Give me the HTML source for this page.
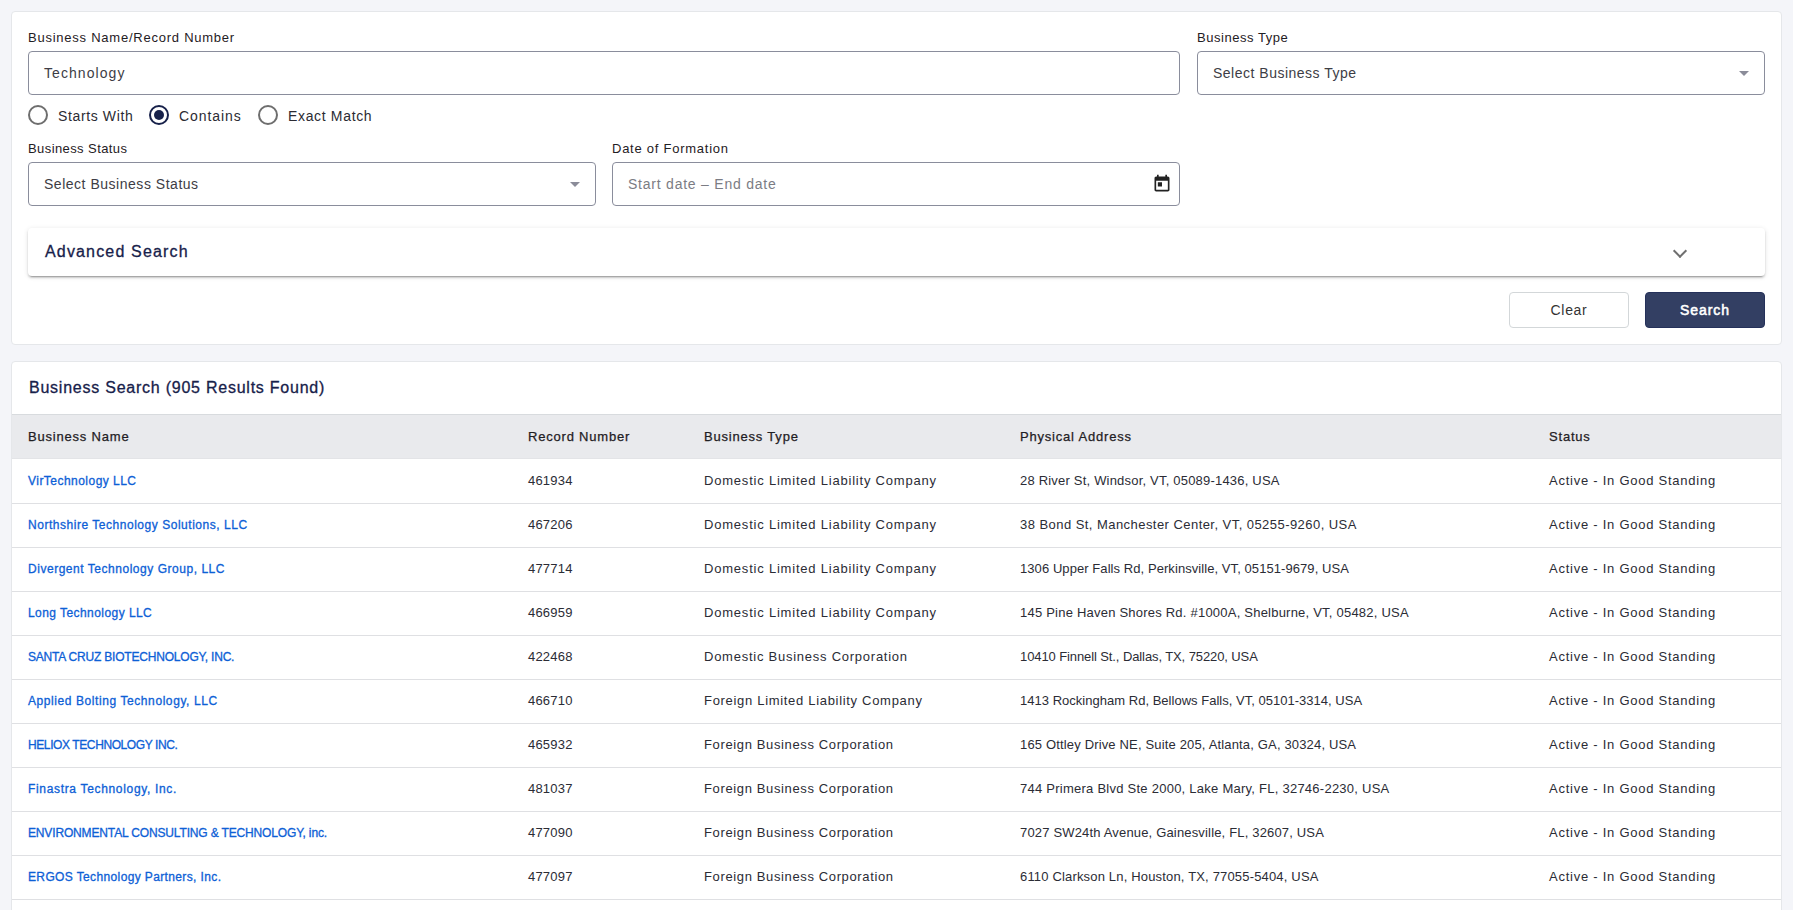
<!DOCTYPE html>
<html><head><meta charset="utf-8">
<style>
*{box-sizing:border-box;margin:0;padding:0}
html,body{width:1793px;height:910px;overflow:hidden}
body{background:#f4f5f9;font-family:"Liberation Sans",sans-serif;position:relative;color:#222}
.card{position:absolute;left:11px;width:1771px;background:#fff;border:1px solid #e5e7ea;border-radius:4px}
#c1{top:11px;height:334px}
#c2{top:361px;height:600px}
.abs{position:absolute;white-space:nowrap}
.lbl{font-size:13px;color:#1f2024;letter-spacing:0.75px}
.inp{position:absolute;border:1px solid #8a8d9c;border-radius:4px;background:#fff}
.itxt{position:absolute;font-size:14px;color:#3d3d45;letter-spacing:0.9px;white-space:nowrap}
.ph{color:#7b7c84}
.caret{position:absolute;width:0;height:0;border-left:5px solid transparent;border-right:5px solid transparent;border-top:5px solid #8b8c99}
.radio{position:absolute;width:20px;height:20px;border-radius:50%;border:2px solid #6e6e6e}
.radio.on{border-color:#17214a}
.radio.on::after{content:"";position:absolute;left:3px;top:3px;width:10px;height:10px;border-radius:50%;background:#17214a}
.ttl{font-size:16px;color:#17214a;-webkit-text-stroke:0.3px #17214a}
.rtxt{font-size:14px;color:#2b2b33;letter-spacing:0.6px}
.panel{position:absolute;left:16px;top:216px;width:1737px;height:48px;background:#fff;border-radius:4px;box-shadow:0 3px 1px -2px rgba(0,0,0,.2),0 2px 2px 0 rgba(0,0,0,.14),0 1px 5px 0 rgba(0,0,0,.12)}
.btn{position:absolute;top:280px;width:120px;height:36px;border-radius:4px;font-size:14px;text-align:center;line-height:34px;letter-spacing:0.5px}
table{position:absolute;left:0;top:52px;width:1769px;border-collapse:separate;border-spacing:0}
th{height:45px;background:#e9eaed;border-top:1px solid #d8dbde;border-bottom:1px solid #e3e4e7;text-align:left;font-weight:normal;font-size:13px;color:#1f2024;padding:0 0 1px 0;letter-spacing:0.8px;-webkit-text-stroke:0.25px #1f2024}
td{height:44px;border-bottom:1px solid #dfe0e3;font-size:13px;color:#2b2c35;padding:0 0 2px 0;letter-spacing:0.2px;white-space:nowrap}
td.c5{letter-spacing:0.75px}
tr.r1 td{height:45px}
td.c4{letter-spacing:0.25px}
.c1{width:516px;padding-left:16px!important}.c2{width:176px}.c3{width:316px}.c4{width:529px}
td a{color:#0d60d6;text-decoration:none;font-size:12px;-webkit-text-stroke:0.3px #0d60d6}
</style></head>
<body>
<div class="card" id="c1">
  <div class="abs lbl" style="left:16px;top:18px;letter-spacing:0.76px">Business Name/Record Number</div>
  <div class="inp" style="left:16px;top:39px;width:1152px;height:44px"></div>
  <div class="itxt" style="left:32px;top:53px;letter-spacing:1.07px">Technology</div>

  <div class="abs lbl" style="left:1185px;top:18px;letter-spacing:0.53px">Business Type</div>
  <div class="inp" style="left:1185px;top:39px;width:568px;height:44px"></div>
  <div class="itxt" style="left:1201px;top:53px;letter-spacing:0.5px">Select Business Type</div>
  <div class="caret" style="left:1727px;top:59px"></div>

  <div class="radio" style="left:16px;top:93px"></div>
  <div class="abs rtxt" style="left:46px;top:96px;letter-spacing:0.63px">Starts With</div>
  <div class="radio on" style="left:137px;top:93px"></div>
  <div class="abs rtxt" style="left:167px;top:96px;letter-spacing:0.93px">Contains</div>
  <div class="radio" style="left:246px;top:93px"></div>
  <div class="abs rtxt" style="left:276px;top:96px;letter-spacing:0.66px">Exact Match</div>

  <div class="abs lbl" style="left:16px;top:129px;letter-spacing:0.41px">Business Status</div>
  <div class="inp" style="left:16px;top:150px;width:568px;height:44px"></div>
  <div class="itxt" style="left:32px;top:164px;letter-spacing:0.52px">Select Business Status</div>
  <div class="caret" style="left:558px;top:170px"></div>

  <div class="abs lbl" style="left:600px;top:129px;letter-spacing:0.75px">Date of Formation</div>
  <div class="inp" style="left:600px;top:150px;width:568px;height:44px"></div>
  <div class="itxt ph" style="left:616px;top:164px;letter-spacing:0.77px">Start date – End date</div>
  <svg class="abs" style="left:1140px;top:162px" width="20" height="20" viewBox="0 0 24 24"><path fill="#222" d="M19 3h-1V1h-2v2H8V1H6v2H5c-1.11 0-1.99.9-1.99 2L3 19c0 1.1.89 2 2 2h14c1.1 0 2-.9 2-2V5c0-1.1-.9-2-2-2zm0 16H5V8h14v11zM7 10h5v5H7z"/></svg>

  <div class="panel">
    <div class="abs ttl" style="left:17px;top:15px;letter-spacing:1.16px">Advanced Search</div>
    <div class="abs" style="left:1647px;top:17.5px;width:10px;height:10px;border-right:2px solid #6f6f6f;border-bottom:2px solid #6f6f6f;transform:rotate(45deg)"></div>
  </div>

  <div class="btn" style="left:1497px;border:1px solid #d3d7d9;color:#333;letter-spacing:0.7px">Clear</div>
  <div class="btn" style="left:1633px;background:#333f63;border:1px solid #25315a;color:#fff;-webkit-text-stroke:0.55px #fff;letter-spacing:0.9px">Search</div>
</div>

<div class="card" id="c2">
  <div class="abs ttl" style="left:17px;top:17px;letter-spacing:0.76px">Business Search (905 Results Found)</div>
  <table>
    <tr><th class="c1">Business Name</th><th class="c2">Record Number</th><th class="c3">Business Type</th><th class="c4">Physical Address</th><th class="c5">Status</th></tr>
    <tr class="r1"><td class="c1"><a style="letter-spacing:0.47px">VirTechnology LLC</a></td><td class="c2">461934</td><td class="c3" style="letter-spacing:0.79px">Domestic Limited Liability Company</td><td class="c4" style="letter-spacing:0.2px">28 River St, Windsor, VT, 05089-1436, USA</td><td class="c5">Active - In Good Standing</td></tr>
    <tr><td class="c1"><a style="letter-spacing:0.53px">Northshire Technology Solutions, LLC</a></td><td class="c2">467206</td><td class="c3" style="letter-spacing:0.79px">Domestic Limited Liability Company</td><td class="c4" style="letter-spacing:0.45px">38 Bond St, Manchester Center, VT, 05255-9260, USA</td><td class="c5">Active - In Good Standing</td></tr>
    <tr><td class="c1"><a style="letter-spacing:0.53px">Divergent Technology Group, LLC</a></td><td class="c2">477714</td><td class="c3" style="letter-spacing:0.79px">Domestic Limited Liability Company</td><td class="c4" style="letter-spacing:0.07px">1306 Upper Falls Rd, Perkinsville, VT, 05151-9679, USA</td><td class="c5">Active - In Good Standing</td></tr>
    <tr><td class="c1"><a style="letter-spacing:0.44px">Long Technology LLC</a></td><td class="c2">466959</td><td class="c3" style="letter-spacing:0.79px">Domestic Limited Liability Company</td><td class="c4" style="letter-spacing:0.22px">145 Pine Haven Shores Rd. #1000A, Shelburne, VT, 05482, USA</td><td class="c5">Active - In Good Standing</td></tr>
    <tr><td class="c1"><a style="letter-spacing:-0.2px">SANTA CRUZ BIOTECHNOLOGY, INC.</a></td><td class="c2">422468</td><td class="c3" style="letter-spacing:0.75px">Domestic Business Corporation</td><td class="c4" style="letter-spacing:-0.1px">10410 Finnell St., Dallas, TX, 75220, USA</td><td class="c5">Active - In Good Standing</td></tr>
    <tr><td class="c1"><a style="letter-spacing:0.58px">Applied Bolting Technology, LLC</a></td><td class="c2">466710</td><td class="c3" style="letter-spacing:0.69px">Foreign Limited Liability Company</td><td class="c4" style="letter-spacing:0.02px">1413 Rockingham Rd, Bellows Falls, VT, 05101-3314, USA</td><td class="c5">Active - In Good Standing</td></tr>
    <tr><td class="c1"><a style="letter-spacing:-0.4px">HELIOX TECHNOLOGY INC.</a></td><td class="c2">465932</td><td class="c3" style="letter-spacing:0.63px">Foreign Business Corporation</td><td class="c4" style="letter-spacing:0.16px">165 Ottley Drive NE, Suite 205, Atlanta, GA, 30324, USA</td><td class="c5">Active - In Good Standing</td></tr>
    <tr><td class="c1"><a style="letter-spacing:0.67px">Finastra Technology, Inc.</a></td><td class="c2">481037</td><td class="c3" style="letter-spacing:0.63px">Foreign Business Corporation</td><td class="c4" style="letter-spacing:0.25px">744 Primera Blvd Ste 2000, Lake Mary, FL, 32746-2230, USA</td><td class="c5">Active - In Good Standing</td></tr>
    <tr><td class="c1"><a style="letter-spacing:-0.15px">ENVIRONMENTAL CONSULTING &amp; TECHNOLOGY, inc.</a></td><td class="c2">477090</td><td class="c3" style="letter-spacing:0.63px">Foreign Business Corporation</td><td class="c4" style="letter-spacing:0.17px">7027 SW24th Avenue, Gainesville, FL, 32607, USA</td><td class="c5">Active - In Good Standing</td></tr>
    <tr><td class="c1"><a style="letter-spacing:0.37px">ERGOS Technology Partners, Inc.</a></td><td class="c2">477097</td><td class="c3" style="letter-spacing:0.63px">Foreign Business Corporation</td><td class="c4" style="letter-spacing:0.17px">6110 Clarkson Ln, Houston, TX, 77055-5404, USA</td><td class="c5">Active - In Good Standing</td></tr>
    <tr><td class="c1"><a style="letter-spacing:0.04px">Green Mountain Technology Services, LLC</a></td><td class="c2">470551</td><td class="c3" style="letter-spacing:0.79px">Domestic Limited Liability Company</td><td class="c4" style="letter-spacing:0.21px">12 Church St, Burlington, VT, 05401, USA</td><td class="c5">Active - In Good Standing</td></tr>
  </table>
</div>
</body></html>
